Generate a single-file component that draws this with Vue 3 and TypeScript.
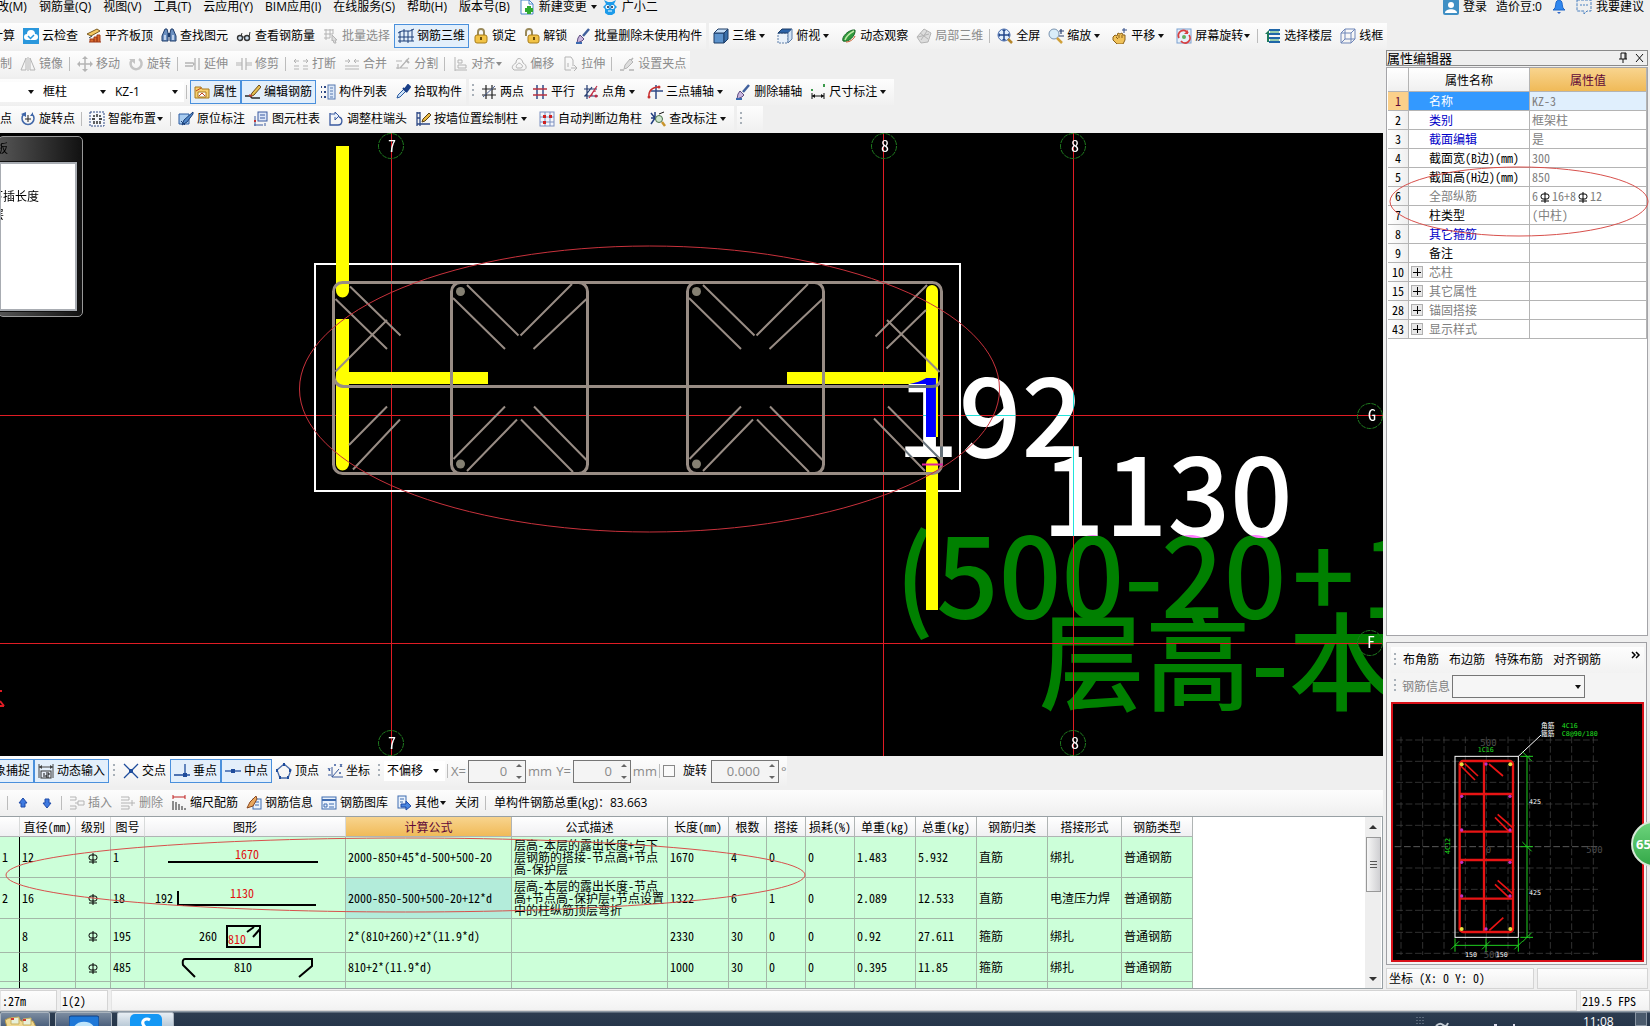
<script setup lang="ts">
import { ref } from 'vue'

interface Tool {
  t?: string
  i?: string
  on?: boolean
  off?: boolean
  dd?: 'split' | 'menu'
  sep?: boolean
  handle?: boolean
}

const G = '#b4b4b4'
const N = '#2f4a86'

const icons: Record<string, string> = {
  newdoc: `<path d="M2 1h8l4 4v10H2z" fill="#fff" stroke="#4a86c8"/><path d="M10 1v4h4" fill="none" stroke="#4a86c8"/><path d="M10 7v8M6 11h8" stroke="#2faa2f" stroke-width="4"/>`,
  robot: `<path d="M4 5l-2-4 4 2h4l4-2-2 4 3 3-2 2v4l-3 2H6l-3-2v-4L1 8z" fill="#1d9bea"/><circle cx="5.500" cy="8" r="2" fill="#fff"/><circle cx="10.500" cy="8" r="2" fill="#fff"/><circle cx="6" cy="8" r="1" fill="#124"/><circle cx="10" cy="8" r="1" fill="#124"/><path d="M6 12h4" stroke="#fff"/>`,
  login: `<rect x="0" y="0" width="16" height="16" rx="2" fill="#3f8fc4"/><circle cx="8" cy="6" r="3" fill="#fff"/><path d="M2 14c0-5 12-5 12 0z" fill="#fff"/>`,
  bell: `<path d="M8 1c4 0 3 6 4 8l2 2H2l2-2c1-2 0-8 4-8z" fill="#2f86ee" stroke="#1f66c8"/><path d="M6 13h4l-2 2z" fill="#2f66c8"/>`,
  comment: `<path d="M1 1h14v11h-4l-3 3v-3H1z" fill="none" stroke="#4a80c0" stroke-dasharray="3 1"/><path d="M4 6h2M7 6h2M10 6h2" stroke="#4a80c0"/>`,
  cloud: `<rect width="16" height="16" fill="#2a97dc"/><path d="M4 12a3 3 0 0 1 0-6 4 4 0 0 1 8 0 3 3 0 0 1 0 6z" fill="#fff"/><path d="M5 8l2.500 2.500L11 7" fill="none" stroke="#2a97dc" stroke-width="1.500"/>`,
  flat: `<path d="M1 6l10-5 3 2L5 8z" fill="#f5c860" stroke="#7a5a20"/><path d="M3 10l3-2" stroke="#345" /><path d="M3 14h12M4 14v-3h4v3M8 14V9h3v5M11 14V7h3v7" fill="#d86a2c" stroke="#a03a18"/>`,
  binoc: `<path d="M4 1h2l1 4v8H1V8zM12 1h-2L9 5v8h6V8z" fill="#6a8fc0" stroke="#1f3d6b"/><path d="M7 5h2v4H7z" fill="#1f3d6b"/><path d="M4 7v5M12 7v5" stroke="#dce8f8" stroke-width="1.500"/>`,
  glasses: `<circle cx="4" cy="10" r="2.500" fill="#cde" stroke="#333" stroke-width="1.400"/><circle cx="11" cy="10" r="2.500" fill="#cde" stroke="#333" stroke-width="1.400"/><path d="M6 9h3M6 5L5 8M14 4l-1 5" stroke="#333" fill="none"/>`,
  batch: `<path d="M1 2h9M1 6h9M1 10h6M3 1v11M7 1v9M10 1v5" stroke="${G}"/><path d="M9 7l5 5-2 0 1 3-2 0-1-3-1 1z" fill="#ddd" stroke="${G}"/>`,
  grid3d: `<path d="M2 3v12M6 1v12M10 3v12M14 1v12M0 5l4-2 4 0 4 0 4-2M0 9h16M0 13h16" fill="none" stroke="#1c3f78"/>`,
  lock: `<path d="M5 7V4a3 3 0 0 1 6 0v3" fill="none" stroke="#9a8a5a" stroke-width="2"/><rect x="2" y="7" width="12" height="8" rx="2" fill="#f2c346" stroke="#a87c18"/><path d="M8 9v3" stroke="#6a4c08" stroke-width="2"/>`,
  unlock: `<path d="M2 8V4a3 3 0 0 1 6 0v3" fill="none" stroke="#9a8a5a" stroke-width="2"/><rect x="4" y="7" width="11" height="8" rx="2" fill="#f2c346" stroke="#a87c18"/><path d="M10 9v3" stroke="#6a4c08" stroke-width="2"/>`,
  brush: `<path d="M14 1L8 8" stroke="#3f5f9c" stroke-width="2.500"/><path d="M5 7l4 4-2 2-5 2 1-5z" fill="#c9b6dd" stroke="#5d4a80"/><path d="M1 15h6" stroke="#3a6ab0" stroke-width="2"/>`,
  cube: `<path d="M1 5h10v10H1z" fill="#5d93cc" stroke="#1d3c66"/><path d="M1 5l4-4h10l-4 4z" fill="#c4dcf4" stroke="#1d3c66"/><path d="M11 15l4-4V1l-4 4z" fill="#3a6fa8" stroke="#1d3c66"/>`,
  cubetop: `<path d="M1 5h10v10H1z" fill="#e9f1fa" stroke="#5f7fa8" stroke-dasharray="2 1"/><path d="M1 5l4-4h10l-4 4z" fill="#2a62a8" stroke="#1d3c66"/><path d="M11 15l4-4V1l-4 4z" fill="#d2e2f4" stroke="#5f7fa8"/>`,
  orbit: `<path d="M2 13c-2-4 6-12 12-11 1 5-6 13-12 11z" fill="#2f9a3c" stroke="#1b6628"/><path d="M4 12C6 7 9 5 13 3" stroke="#bfe8a8" fill="none" stroke-width="1.500"/><path d="M5 14c4 0 8-3 9-6" stroke="#c85a28" fill="none"/>`,
  local3d: `<path d="M8 1l7 4-3 9-7 1-4-6z" fill="#ddd" stroke="${G}"/><path d="M4 5l8 6M11 3L5 12M2 9l11-3" stroke="${G}"/>`,
  fit: `<circle cx="7" cy="7" r="6" fill="#e2eefc" stroke="#3f64a8"/><path d="M7 2v10M2 7h10" stroke="#23488c" stroke-width="1.500"/><path d="M7 1l2 2H5zM7 13l2-2H5zM1 7l2-2v4zM13 7l-2-2v4z" fill="#23488c"/><path d="M11 11l4 4" stroke="#b5862c" stroke-width="2.500"/>`,
  zoom: `<circle cx="6" cy="6" r="5" fill="#d9ecf8" stroke="#7a94b0"/><path d="M9 10l5 5" stroke="#d0a03a" stroke-width="2.500"/><path d="M13 1v5M11 3h5M11 8h5" stroke="#2a3f70" stroke-width="1.200"/>`,
  pan: `<path d="M1 9l2-2 2 1 1-3 2 1 2-1 1 2 2 0v5l-2 4H5l-4-4z" fill="#f0c25a" stroke="#8a6018"/><path d="M4 9l2 2M7 7v3M10 7v3" stroke="#8a6018"/><path d="M12 0v5M10 2h5" stroke="#2f4a86"/>`,
  rot: `<rect x="1" y="1" width="14" height="14" fill="#e6f0fa" stroke="#7aa0d0"/><path d="M3 10a5 5 0 0 1 9-5M13 7a5 5 0 0 1-8 6" fill="none" stroke="#d84040" stroke-width="1.800"/><path d="M12 2v4H8z" fill="#d84040"/><circle cx="8" cy="9" r="2" fill="#60b060"/>`,
  floors: `<path d="M4 2h11M4 6h11M4 10h11M4 14h11" stroke="#1f66a8" stroke-width="2"/><path d="M0 6l4-4v4z" fill="#1f7a5a"/><path d="M3 4v10" stroke="#1f7a5a" stroke-width="2"/><path d="M5 4h9M5 12h9" stroke="#38a060"/>`,
  wire: `<path d="M1 5h10v10H1zM1 5l4-4h10l-4 4M15 1v10l-4 4M5 1v10M5 11h10M5 11l-4 4" fill="none" stroke="#6f86b8"/>`,
  mirror: `<path d="M6 2v12H1zM10 2v12h5z" fill="none" stroke="${G}"/><path d="M8 1v14" stroke="${G}"/>`,
  move: `<path d="M8 1v14M1 8h14" stroke="${G}" stroke-width="1.500"/><path d="M8 0l3 3H5zM8 16l3-3H5zM0 8l3-3v6zM16 8l-3-3v6z" fill="${G}"/>`,
  rotate: `<path d="M4 4a5.500 5.500 0 1 0 7-1" fill="none" stroke="#c4c4c4" stroke-width="2.500"/><path d="M1 3h6v5z" fill="#c4c4c4"/>`,
  extend: `<path d="M0 7h8M0 10h8M10 2v12M14 2v12" stroke="${G}" stroke-width="1.300"/><path d="M8 6l2 2-2 2z" fill="${G}"/>`,
  trim: `<path d="M0 7h6M10 7h6M0 9h6M10 9h6M6 2v12M10 2v12" stroke="${G}" stroke-width="1.200"/>`,
  brk: `<path d="M1 13h5M10 13h5M1 10h5M10 10h5M1 5h5M10 5h5M3 3L1 5l2 2M13 3l2 2-2 2" fill="none" stroke="${G}"/>`,
  merge: `<path d="M1 13h14M1 10h14M1 5h5M10 5h5M4 3l2 2-2 2M12 3l-2 2 2 2" fill="none" stroke="${G}"/>`,
  split: `<path d="M1 5h6M1 12h12M14 2L5 12M3 8v5" stroke="${G}" stroke-width="1.200"/><path d="M11 4l3 3" stroke="${G}" stroke-width="2"/>`,
  align: `<path d="M3 1v14M3 14h12M6 4h4v3H6zM6 9h8v3H6z" fill="none" stroke="${G}"/>`,
  offset: `<path d="M3 14c-4-3 0-6 2-7 0-6 6-6 7 0 4 2 4 6 1 7z" fill="none" stroke="${G}"/><path d="M6 12c-2-1 0-4 2-5 3 1 5 4 2 5z" fill="none" stroke="${G}"/>`,
  stretch: `<path d="M3 1h6l2 3v6M3 1v13h6" fill="none" stroke="${G}"/><path d="M6 7v4M9 12h5M12 9l3 3-3 3" fill="none" stroke="${G}"/>`,
  grip: `<path d="M1 14h4M10 14h5M14 2L7 10" stroke="${G}" stroke-width="1.500"/><path d="M11 3l3 3-6 6-3 1 1-4z" fill="#ddd" stroke="${G}"/>`,
  prop: `<path d="M1 3h6l1 2h7v9H1z" fill="#f6d070" stroke="#a8781c"/><path d="M4 8h8v5H4z" fill="#fff" stroke="#a8781c"/><path d="M5 12l3-3 3 3M2 7l5-3" stroke="#c04020" fill="none"/>`,
  pencil: `<path d="M0 12h5l2 2h8" stroke="#2a2a2a" fill="none" stroke-width="1.300"/><path d="M14 1l-7 8-2 4 4-2 7-8z" fill="#e8c050" stroke="#6a4a18"/><path d="M4 11l3 1" stroke="#c03a3a" stroke-width="1.500"/>`,
  list: `<path d="M1 3h1M1 8h1M1 13h1M4 3h2M4 8h2M4 13h2" stroke="${N}" stroke-width="2"/><rect x="8" y="1" width="7" height="14" fill="#dce8f8" stroke="#5678b0"/><path d="M10 4h3M10 7h3M10 10h3M10 13h3" stroke="#5678b0"/>`,
  dropper: `<path d="M2 14l1-3 6-6 2 2-6 6z" fill="#cfe3f8" stroke="#2a5aa0"/><path d="M8 4l4 4M10 5l3-4 2 2-3 4z" stroke="#1a3f88" stroke-width="2" fill="#1a3f88"/>`,
  twopt: `<path d="M5 1v14M11 1v14M1 5h14M1 11h14" stroke="#222" stroke-width="1.200"/><path d="M2 13L14 2" stroke="#4a5f90"/>`,
  par: `<path d="M5 1v14M11 1v14" stroke="${N}" stroke-width="1.500"/><path d="M1 5h14M1 11h14" stroke="#b83040" stroke-width="1.500"/>`,
  ptang: `<path d="M4 1v14M1 5h13M9 3L2 12M1 12h14" stroke="#223a70" stroke-width="1.200"/><path d="M6 14L14 2M9 12a4 4 0 0 1 4-5" stroke="#c02840" fill="none" stroke-width="1.200"/><circle cx="13" cy="12" r="1.500" fill="#c02840"/>`,
  threept: `<path d="M9 1v14M4 7h12" stroke="${N}" stroke-width="1.500"/><path d="M2 14C1 7 5 3 12 3" stroke="#c83030" fill="none" stroke-width="1.500"/><circle cx="2" cy="13" r="1.500" fill="#c83030"/><circle cx="12" cy="3" r="1.500" fill="#c83030"/>`,
  dim: `<path d="M2 9v6M14 9v6M2 12h12" stroke="#111"/><path d="M2 12l3-2v4zM14 12l-3-2v4z" fill="#111"/><rect x="1" y="5" width="2" height="2" fill="#3a9a4a"/><rect x="13" y="0" width="2" height="3" fill="#3a9a4a"/>`,
  rotpt: `<path d="M4 3a6 6 0 1 0 8 0" fill="none" stroke="#3f66a8" stroke-width="1.500"/><path d="M1 3l5-2v5zM13 1v4h-3" fill="#3f66a8"/><path d="M8 4v7M5 8h6" stroke="#222"/>`,
  smart: `<rect x="1" y="1" width="14" height="14" fill="#f6f8fc" stroke="${N}" stroke-dasharray="2 1"/><path d="M5 4v2M8 3v3M11 4v2M5 10v3M8 10v3M11 10v3M3 8h3M10 8h3" stroke="#111" stroke-width="1.300"/>`,
  orig: `<path d="M1 3h10v10H1z" fill="#a8ccf0" stroke="#2a5aa0"/><path d="M15 1L6 9l-2 5 5-3 6-8z" fill="#4f86c8" stroke="#1a3f78"/><path d="M3 10l4 4" stroke="#1a3f78"/>`,
  coltbl: `<rect x="5" y="1" width="9" height="9" fill="#dce6f8" stroke="#3a5aa0"/><path d="M7 4h5M7 7h5" stroke="#3a5aa0"/><path d="M1 14h9M2 5v10M12 12v3" stroke="#3a5aa0"/><path d="M1 10h2" stroke="#c03030" stroke-width="2"/>`,
  colhead: `<path d="M2 2v12h8c5 0 5-7 1-8" fill="none" stroke="#3a5aa0" stroke-width="1.300"/><path d="M2 3h5V1l4 4-4 4V6" fill="#e6eefa" stroke="#3a5aa0"/>`,
  bywall: `<path d="M2 1v14M5 1v14M2 13h13M2 2h3M2 7h3" stroke="${N}" stroke-width="1.300"/><path d="M14 2L8 8l-1 3 3-1 6-6z" fill="#e8b840" stroke="#5a4010"/>`,
  corner: `<rect x="1" y="1" width="14" height="14" fill="#f4f6fc" stroke="#7c90c0"/><path d="M6 1v14M11 1v14M1 6h14M1 11h14" stroke="#7c90c0"/><rect x="4" y="4" width="3" height="3" fill="#d02020"/><rect x="10" y="4" width="3" height="3" fill="#d02020"/><rect x="4" y="10" width="3" height="3" fill="#d02020"/>`,
  checkmod: `<path d="M1 2l4 5-4 6M5 1v5M1 7h5" fill="none" stroke="#223f80" stroke-width="1.500"/><circle cx="9" cy="8" r="3.500" fill="#cfe6cf" stroke="#4a704a"/><path d="M12 11l3 4" stroke="#c8942c" stroke-width="2.500"/><path d="M9 3l5-2" stroke="#111"/>`,
  dyn: `<path d="M1 1v14M15 1v14M1 4h14" stroke="#444"/><path d="M1 4l3-2v4zM15 4l-3-2v4z" fill="#444"/><rect x="3" y="8" width="10" height="7" fill="#e8eef8" stroke="#333"/><path d="M6 10v4M8 10h3v2H8v2h3" stroke="#111" fill="none"/>`,
  cross: `<path d="M1 1l14 14M15 1L1 15" stroke="#1e4c9c" stroke-width="1.300"/><rect x="6" y="6" width="4" height="4" fill="#1e4c9c"/>`,
  perp: `<path d="M0 12h16M11 1v11" stroke="#1e4c9c" stroke-width="1.300"/><rect x="9" y="10" width="4" height="4" fill="#1e4c9c"/>`,
  mid: `<path d="M0 8h16" stroke="#1e4c9c" stroke-width="1.300"/><rect x="6" y="6" width="4" height="4" fill="#1e4c9c"/>`,
  poly: `<path d="M8 1l7 6-3 8H4L1 7z" fill="none" stroke="#4a6ca8" stroke-width="1.300"/><path d="M8 0v3M1 6v3M14 6v3M4 13v3M12 13v3" stroke="#1e4c9c" stroke-width="2"/>`,
  coord: `<path d="M5 4v10h11M5 14l7-8M1 12h3M1 5l2 3M3 5l-1 3M13 1l2 3M15 1l-2 3" fill="none" stroke="#3a5a9c"/><circle cx="8" cy="2" r="1" fill="#3a5a9c"/><circle cx="13" cy="10" r="1" fill="#3a5a9c"/>`,
  up: `<path d="M8 3l4 5h-2v4H6V8H4z" fill="#3f7ae0" stroke="#1f4aa8"/>`,
  down: `<path d="M8 13l4-5h-2V4H6v4H4z" fill="#3f7ae0" stroke="#1f4aa8"/>`,
  ins: `<path d="M1 2h6v3H1M1 14h6v-3H1M6 8h3M9 6h6v4H9z" fill="none" stroke="${G}"/>`,
  del: `<path d="M1 2h8v3H1M1 14h8v-3H1M1 8h14M12 5v6" fill="none" stroke="${G}"/>`,
  scale: `<path d="M2 2h12M2 0v4M14 0v4" stroke="#c02020"/><path d="M2 6v9M5 7v8M8 9v6M11 11v4M14 13v2" stroke="#222"/>`,
  info: `<rect x="7" y="4" width="8" height="10" fill="#eaf2fc" stroke="#3f6cb0"/><path d="M9 7h4M9 10h4" stroke="#3f6cb0"/><path d="M10 1L4 7l-3 6 6-2 4-7z" fill="#e8a860" stroke="#8a4820"/>`,
  lib: `<rect x="1" y="2" width="14" height="12" fill="#eaf2fc" stroke="#3f6cb0"/><path d="M1 5h14" stroke="#3f6cb0" stroke-width="2"/><path d="M3 9h3v3H3zM8 9h5M8 12h5" stroke="#3f6cb0" fill="none"/>`,
  other: `<rect x="2" y="1" width="8" height="12" fill="#eaf2fc" stroke="#3f6cb0"/><path d="M4 4h4M4 7h3" stroke="#3f6cb0"/><path d="M5 9h5V6l5 5-5 4v-3H5z" fill="#4a86e0" stroke="#1f4aa8"/>`,
}

const grade = `<path d="M5 0v11M1 9h8" stroke="#000"/><path d="M3 2h4q2 0 2 2.500t-2 2.500H3q-2 0-2-2.500T3 2z" fill="none" stroke="#000"/>`

const menus = ['改(M)', '钢筋量(Q)', '视图(V)', '工具(T)', '云应用(Y)', 'BIM应用(I)', '在线服务(S)', '帮助(H)', '版本号(B)']

const viewBars: Tool[][] = [
  [
    { t: '计算' }, { t: '云检查', i: 'cloud' }, { t: '平齐板顶', i: 'flat' }, { t: '查找图元', i: 'binoc' },
    { t: '查看钢筋量', i: 'glasses' }, { t: '批量选择', i: 'batch', off: true }, { t: '钢筋三维', i: 'grid3d', on: true },
    { t: '锁定', i: 'lock' }, { t: '解锁', i: 'unlock' }, { t: '批量删除未使用构件', i: 'brush' },
  ],
  [
    { t: '三维', i: 'cube', dd: 'split' }, { t: '俯视', i: 'cubetop', dd: 'split' }, { t: '动态观察', i: 'orbit' },
    { t: '局部三维', i: 'local3d', off: true }, { sep: true }, { t: '全屏', i: 'fit' }, { t: '缩放', i: 'zoom', dd: 'split' },
    { t: '平移', i: 'pan', dd: 'split' }, { t: '屏幕旋转', i: 'rot', dd: 'menu' }, { sep: true },
    { t: '选择楼层', i: 'floors' }, { t: '线框', i: 'wire' },
  ],
]

const editBar: Tool[] = [
  { t: '制', off: true }, { t: '镜像', i: 'mirror', off: true }, { sep: true }, { t: '移动', i: 'move', off: true },
  { t: '旋转', i: 'rotate', off: true }, { sep: true }, { t: '延伸', i: 'extend', off: true }, { t: '修剪', i: 'trim', off: true },
  { sep: true }, { t: '打断', i: 'brk', off: true }, { t: '合并', i: 'merge', off: true }, { t: '分割', i: 'split', off: true },
  { sep: true }, { t: '对齐', i: 'align', off: true, dd: 'menu' }, { t: '偏移', i: 'offset', off: true },
  { t: '拉伸', i: 'stretch', off: true }, { sep: true }, { t: '设置夹点', i: 'grip', off: true },
]

const memberBar: Tool[] = [
  { t: '属性', i: 'prop', on: true }, { t: '编辑钢筋', i: 'pencil', on: true }, { t: '构件列表', i: 'list' }, { t: '拾取构件', i: 'dropper' },
]
const axisBar: Tool[] = [
  { handle: true }, { t: '两点', i: 'twopt' }, { t: '平行', i: 'par' }, { t: '点角', i: 'ptang', dd: 'split' },
  { t: '三点辅轴', i: 'threept', dd: 'split' }, { t: '删除辅轴', i: 'brush' }, { t: '尺寸标注', i: 'dim', dd: 'split' },
]
const columnBar: Tool[] = [
  { t: '点' }, { t: '旋转点', i: 'rotpt' }, { sep: true }, { t: '智能布置', i: 'smart', dd: 'menu' }, { sep: true },
  { t: '原位标注', i: 'orig' }, { t: '图元柱表', i: 'coltbl' }, { t: '调整柱端头', i: 'colhead' },
  { t: '按墙位置绘制柱', i: 'bywall', dd: 'split' }, { t: '自动判断边角柱', i: 'corner' }, { t: '查改标注', i: 'checkmod', dd: 'split' },
]
const snapBar: Tool[] = [
  { t: '象捕捉', on: true }, { t: '动态输入', i: 'dyn', on: true }, { handle: true }, { t: '交点', i: 'cross' },
  { t: '垂点', i: 'perp', on: true }, { t: '中点', i: 'mid', on: true }, { t: '顶点', i: 'poly' }, { t: '坐标', i: 'coord' }, { handle: true },
]
const rebarBar: Tool[] = [
  { sep: true }, { i: 'up' }, { i: 'down' }, { sep: true }, { t: '插入', i: 'ins', off: true }, { t: '删除', i: 'del', off: true },
  { t: '缩尺配筋', i: 'scale' }, { t: '钢筋信息', i: 'info' }, { t: '钢筋图库', i: 'lib' }, { t: '其他', i: 'other', dd: 'menu' },
  { t: '关闭' }, { sep: true },
]

const props = [
  { n: 1, k: '名称', v: 'KZ-3', c: 'sel' },
  { n: 2, k: '类别', v: '框架柱', c: 'blue' },
  { n: 3, k: '截面编辑', v: '是', c: 'blue' },
  { n: 4, k: '截面宽(B边)(mm)', v: '300', c: '' },
  { n: 5, k: '截面高(H边)(mm)', v: '850', c: '' },
  { n: 6, k: '全部纵筋', v: '', c: 'gray' },
  { n: 7, k: '柱类型', v: '(中柱)', c: '' },
  { n: 8, k: '其它箍筋', v: '', c: 'blue' },
  { n: 9, k: '备注', v: '', c: '' },
  { n: 10, k: '芯柱', v: '', c: 'gray', plus: true },
  { n: 15, k: '其它属性', v: '', c: 'gray', plus: true },
  { n: 28, k: '锚固搭接', v: '', c: 'gray', plus: true },
  { n: 43, k: '显示样式', v: '', c: 'gray', plus: true },
]

const heads = ['', '直径(mm)', '级别', '图号', '图形', '计算公式', '公式描述', '长度(mm)', '根数', '搭接', '损耗(%)', '单重(kg)', '总重(kg)', '钢筋归类', '搭接形式', '钢筋类型']
const cols = [20, 56, 35, 34, 201, 166, 156, 61, 38, 39, 49, 61, 61, 71, 74, 71]
const bars = [
  { n: '1', d: '12', no: '1', f: '2000-850+45*d-500+500-20', desc: ['层高-本层的露出长度+与下', '层钢筋的搭接-节点高+节点', '高-保护层'], rest: ['1670', '4', '0', '0', '1.483', '5.932', '直筋', '绑扎', '普通钢筋'] },
  { n: '2', d: '16', no: '18', f: '2000-850-500+500-20+12*d', desc: ['层高-本层的露出长度-节点', '高+节点高-保护层+节点设置', '中的柱纵筋顶层弯折'], rest: ['1322', '6', '1', '0', '2.089', '12.533', '直筋', '电渣压力焊', '普通钢筋'] },
  { n: '', d: '8', no: '195', f: '2*(810+260)+2*(11.9*d)', desc: [], rest: ['2330', '30', '0', '0', '0.92', '27.611', '箍筋', '绑扎', '普通钢筋'] },
  { n: '', d: '8', no: '485', f: '810+2*(11.9*d)', desc: [], rest: ['1000', '30', '0', '0', '0.395', '11.85', '箍筋', '绑扎', '普通钢筋'] },
]

const category = ref('框柱')
const member = ref('KZ-1')
const offsetMode = ref('不偏移')
const dx = ref('0')
const dy = ref('0')
const angle = ref('0.000')
const rotateOn = ref(false)
const rebarInfo = ref('')

const gridX = [64, 129, 193, 257, 320, 385, 450, 512, 576, 641]
const gridY = [330, 394, 457, 522, 586, 714, 778, 841, 907, 970]
</script>

<template>
  <div class="app">
    <header class="menubar">
      <nav class="menus">
        <a v-for="m in menus" :key="m" href="#">{{ m }}</a>
        <button class="mi new"><svg viewBox="0 0 16 16" class="ic" v-html="icons.newdoc"></svg>新建变更<i class="arr split"></i></button>
        <button class="mi bot"><svg viewBox="0 0 16 16" class="ic" v-html="icons.robot"></svg>广小二</button>
      </nav>
      <div class="account">
        <button class="mi"><svg viewBox="0 0 16 16" class="ic" v-html="icons.login"></svg>登录</button>
        <span class="beans">造价豆:0</span>
        <button class="mi" aria-label="消息"><svg viewBox="0 0 16 16" class="ic" v-html="icons.bell"></svg></button>
        <button class="mi"><svg viewBox="0 0 16 16" class="ic" v-html="icons.comment"></svg>我要建议</button>
      </div>
    </header>

    <div class="row view-row">
      <div v-for="(bar, b) in viewBars" :key="b" class="group">
        <template v-for="(x, k) in bar" :key="k">
          <span v-if="x.sep" class="sep"></span>
          <button v-else class="tool" :class="{ on: x.on }" :disabled="x.off">
            <svg v-if="x.i" viewBox="0 0 16 16" class="ic" v-html="icons[x.i]"></svg>{{ x.t }}<i v-if="x.dd" class="arr" :class="x.dd"></i>
          </button>
        </template>
      </div>
    </div>

    <div class="body">
      <main class="left">
        <div class="row lead">
          <div class="group">
            <template v-for="(x, k) in editBar" :key="k">
              <span v-if="x.sep" class="sep"></span>
              <button v-else class="tool" :disabled="x.off">
                <svg v-if="x.i" viewBox="0 0 16 16" class="ic" v-html="icons[x.i]"></svg>{{ x.t }}<i v-if="x.dd" class="arr" :class="x.dd"></i>
              </button>
            </template>
          </div>
        </div>
        <div class="row short">
          <div class="group">
            <span class="combo tail"><i class="arr split"></i></span>
            <label class="combo"><select v-model="category" aria-label="构件类型"><option>框柱</option></select><i class="arr split"></i></label>
            <label class="combo"><select v-model="member" aria-label="构件名称"><option>KZ-1</option></select><i class="arr split"></i></label>
            <span class="sep"></span>
            <button v-for="x in memberBar" :key="x.t" class="tool" :class="{ on: x.on }">
              <svg viewBox="0 0 16 16" class="ic" v-html="icons[x.i!]"></svg>{{ x.t }}
            </button>
          </div>
          <div class="group">
            <template v-for="(x, k) in axisBar" :key="k">
              <span v-if="x.handle" class="handle"></span>
              <button v-else class="tool">
                <svg viewBox="0 0 16 16" class="ic" v-html="icons[x.i!]"></svg>{{ x.t }}<i v-if="x.dd" class="arr" :class="x.dd"></i>
              </button>
            </template>
          </div>
        </div>
        <div class="row lead">
          <div class="group">
            <template v-for="(x, k) in columnBar" :key="k">
              <span v-if="x.sep" class="sep"></span>
              <button v-else class="tool">
                <svg v-if="x.i" viewBox="0 0 16 16" class="ic" v-html="icons[x.i]"></svg>{{ x.t }}<i v-if="x.dd" class="arr" :class="x.dd"></i>
              </button>
            </template>
          </div>
          <div class="group stub"><span class="handle"></span></div>
        </div>

        <section class="canvas">
          <svg class="scene" viewBox="0 133 1383 623" preserveAspectRatio="xMinYMin slice">
            <g class="big" fill="#008000">
              <text x="895" y="618">(<tspan x="936">500-</tspan><tspan x="1161">20</tspan><tspan x="1292">+</tspan><tspan x="1361">1</tspan></text>
              <text x="1039" y="702" class="cjk">层高-本</text>
            </g>
            <g stroke="#e01c24" fill="none">
              <path d="M391.500 133V756M883.500 133V756M1073.500 133V756M0 415.500H1383M0 643.500H1383" />
              <path d="M0 691h2M0 706h4M0 701l4 5" stroke-width="2" />
            </g>
            <g stroke="#1f7a1f" fill="none" stroke-dasharray="5 1">
              <circle v-for="c in [[391, 146], [884, 146], [1073, 146], [391, 743], [1073, 743], [1370, 416], [1370, 643]]" :key="c.join()" :cx="c[0]" :cy="c[1]" r="12.500" />
            </g>
            <g fill="#fff" class="mark">
              <text x="388" y="152">7</text><text x="881" y="152">8</text><text x="1071" y="152">8</text>
              <text x="388" y="749">7</text><text x="1071" y="749">8</text>
              <text x="1368" y="421">G</text><text x="1367" y="648">F</text>
            </g>
            <rect x="315" y="264" width="645" height="227" fill="none" stroke="#fff" stroke-width="2" />
            <g fill="#ff0">
              <path d="M336 146h13v145a6 6 0 0 1-13 0zM336 319h13v145a6 6 0 0 1-13 0zM345 372h143v12H345z" />
              <path d="M926 437v-146a6 6 0 0 1 12 0v146zM926 610V464a6 6 0 0 1 12 0v146zM787 372h143v12H787z" />
            </g>
            <g stroke="#988c84" fill="none" stroke-width="3">
              <rect x="333.500" y="282.500" width="608" height="191" rx="9" />
              <path d="M333.500 375q1 11 10 11.500H932q9 0 9.500-11" />
              <g v-for="ox in [0, 236]" :key="ox" :transform="`translate(${ox} 0)`">
                <rect x="451.500" y="282.500" width="136" height="191" rx="9" />
                <path stroke-width="2" d="M467 285L518.500 335.500M453 298L505 349M572 284L520.500 335.500M586.500 299L533.500 349M453.500 459L505 406.500M467 471L517 419.500M586.500 460L534 406.500M573 472L521 419.500" />
                <g fill="#858072" stroke="none"><circle cx="460.500" cy="291.500" r="4.500" /><circle cx="460.500" cy="464" r="4.500" /></g>
              </g>
              <path stroke-width="2" d="M350 286.500L400.500 335.500M335.500 299L387 349M335.500 371.500L387 320M349 445L387 406.500M353 469.500L400 419.500" />
              <path stroke-width="2" d="M927 285L875.500 336.500M926 310L886.500 348.500M887 320L939.500 372M888 406.500L940.500 459.500M874 418.500L925 471" />
            </g>
            <path d="M922 464.500h21" stroke="#e0209c" stroke-width="2" />
            <g class="big xor" fill="#fff">
              <text x="896" y="457">192</text>
              <text x="1042" y="536">1130</text>
            </g>
            <ellipse cx="649.500" cy="389" rx="350" ry="143" fill="none" stroke="#c8323c" />
          </svg>
          <aside class="float">
            <div class="float-title">板</div>
            <div class="float-body"><p>下插长度</p><p class="cut">层</p></div>
          </aside>
        </section>

        <div class="row snap">
          <div class="group">
            <template v-for="(x, k) in snapBar" :key="k">
              <span v-if="x.handle" class="handle"></span>
              <button v-else class="tool" :class="{ on: x.on, cropped: k === 0 }">
                <svg v-if="x.i" viewBox="0 0 16 16" class="ic" v-html="icons[x.i]"></svg>{{ x.t }}
              </button>
            </template>
            <label class="combo narrow"><select v-model="offsetMode" aria-label="偏移方式"><option>不偏移</option></select><i class="arr split"></i></label>
            <span class="sep"></span>
            <label class="num">X=<span class="spin"><input v-model="dx" disabled /><i class="ud"></i></span>mm</label>
            <label class="num">Y=<span class="spin"><input v-model="dy" disabled /><i class="ud"></i></span>mm</label>
            <span class="sep"></span>
            <label class="chk"><input v-model="rotateOn" type="checkbox" />旋转</label>
            <span class="num"><span class="spin wide"><input v-model="angle" aria-label="旋转角度" disabled /><i class="ud"></i></span>°</span>
          </div>
        </div>

        <div class="row rebar">
          <template v-for="(x, k) in rebarBar" :key="k">
            <span v-if="x.sep" class="sep"></span>
            <button v-else class="tool" :aria-label="x.t ?? x.i" :disabled="x.off">
              <svg v-if="x.i" viewBox="0 0 16 16" class="ic" v-html="icons[x.i]"></svg>{{ x.t }}<i v-if="x.dd" class="arr" :class="x.dd"></i>
            </button>
          </template>
          <span class="total">单构件钢筋总重(kg)：83.663</span>
        </div>

        <section class="sheet">
          <table class="bars">
            <colgroup><col v-for="(w, k) in cols" :key="k" :style="{ width: w + 'px' }" /></colgroup>
            <thead><tr><th v-for="(h, k) in heads" :key="k" :class="{ hot: k === 5 }">{{ h }}</th></tr></thead>
            <tbody>
              <tr v-for="(r, k) in bars" :key="k" :class="'r' + k">
                <th class="rn">{{ r.n }}</th>
                <td>{{ r.d }}</td>
                <td class="mid"><svg class="grade" viewBox="0 0 10 11" v-html="grade"></svg></td>
                <td>{{ r.no }}</td>
                <td class="shape">
                  <svg v-if="k === 0" viewBox="145 837 200 40" width="200" height="40"><path d="M168 862h150" stroke="#000" stroke-width="2" /><text x="235" y="859" class="red">1670</text></svg>
                  <svg v-else-if="k === 1" viewBox="145 878 200 40" width="200" height="40"><path d="M178 891v14h138" fill="none" stroke="#000" stroke-width="2" /><text x="155" y="903">192</text><text x="230" y="898" class="red">1130</text></svg>
                  <svg v-else-if="k === 2" viewBox="145 919 200 33" width="200" height="33"><path d="M227 926h33v21h-33zM247 932l7-5M253 937l7-8" fill="none" stroke="#000" stroke-width="2" /><text x="199" y="941">260</text><text x="228" y="944" class="red">810</text></svg>
                  <svg v-else viewBox="145 953 200 28" width="200" height="28"><path d="M195 977l-12-12q-1-6 2-6h127v7l-13 11" fill="none" stroke="#000" stroke-width="2" /><text x="234" y="972">810</text></svg>
                </td>
                <td :class="{ cur: k === 1 }">{{ r.f }}</td>
                <td class="desc"><div v-for="l in r.desc" :key="l">{{ l }}</div></td>
                <td v-for="(v, j) in r.rest" :key="j">{{ v }}</td>
              </tr>
              <tr class="r4"><th class="rn"></th><td v-for="j in 15" :key="j"></td></tr>
            </tbody>
          </table>
          <div class="scroll"><i class="up"></i><span class="thumb"><b></b></span><i class="dn"></i></div>
          <svg class="ring" viewBox="0 0 801 76"><ellipse cx="400.500" cy="38" rx="399.500" ry="37" fill="none" stroke="#d8504c" /></svg>
        </section>
      </main>

      <aside class="right">
        <div class="dock-title"><span>属性编辑器</span>
          <svg viewBox="0 0 30 14" width="30" height="14"><path d="M2 8h8M4 8V2h5v6M8 2v6M6 8v4M19 3l7 8M26 3l-7 8" fill="none" stroke="#111" /></svg>
        </div>
        <section class="prop-box">
          <table class="props">
            <colgroup><col class="c1" /><col class="c2" /><col /></colgroup>
            <thead><tr><th></th><th>属性名称</th><th class="hot">属性值</th></tr></thead>
            <tbody>
              <tr v-for="p in props" :key="p.n" :class="p.c">
                <th>{{ p.n }}</th>
                <td class="k"><button v-if="p.plus" class="plus" aria-label="展开"></button>{{ p.k }}</td>
                <td class="v">
                  <template v-if="p.n === 6">6<svg class="grade" viewBox="0 0 10 11" v-html="grade"></svg>16+8<svg class="grade" viewBox="0 0 10 11" v-html="grade"></svg>12</template>
                  <template v-else>{{ p.v }}</template>
                </td>
              </tr>
            </tbody>
          </table>
          <svg class="prop-ring" viewBox="0 0 260 71"><ellipse cx="130" cy="35.500" rx="129" ry="34.500" fill="none" stroke="#d8504c" /></svg>
        </section>

        <section class="preview-box">
          <div class="p-tools">
            <span class="handle"></span>
            <button>布角筋</button><button>布边筋</button><button>特殊布筋</button><button>对齐钢筋</button>
            <button class="more" aria-label="更多"><svg viewBox="0 0 10 8" width="10" height="8"><path d="M1 1l3 3-3 3M5 1l3 3-3 3" fill="none" stroke="#000" stroke-width="1.500" /></svg></button>
          </div>
          <div class="p-info">
            <span class="handle"></span>
            <label for="ri">钢筋信息</label>
            <span class="sel"><select id="ri" v-model="rebarInfo"><option value=""></option></select><i class="arr"></i></span>
          </div>
          <svg class="preview" viewBox="34 216 759 780">
            <rect x="34" y="216" width="759" height="780" fill="#000" />
            <g stroke="#4a4a4a" stroke-width="2" stroke-dasharray="20 8" fill="none">
              <path v-for="x in gridX" :key="'x' + x" :d="`M${x} 320V975`" />
              <path v-for="y in gridY" :key="'y' + y" :d="`M50 ${y}H655`" />
              <path d="M45 650H655" stroke="#8a8a8a" />
            </g>
            <g fill="#4c4c4c" class="axis"><text x="302" y="347">500</text><text x="318" y="668">0</text><text x="620" y="668">500</text><text x="312" y="985">500</text></g>
            <rect x="226" y="379" width="190" height="543" fill="none" stroke="#fff" stroke-width="3" />
            <path d="M416 379L484 315" stroke="#fff" stroke-width="3" />
            <g stroke="#e81414" fill="none" stroke-width="7">
              <rect x="240" y="393" width="160" height="513" rx="10" />
              <path d="M313 393V906M240 492h160M240 605h160M240 690h160M240 806h160" />
              <path d="M255 400l40 38M244 408l42 42M328 402l42 36M354 553l45 40M346 562l42 42M354 751l45 40M346 763l42 40M371 863l-42 38" stroke-width="5" />
            </g>
            <g fill="#e8e040"><circle cx="246" cy="403" r="6" /><circle cx="392" cy="403" r="6" /><circle cx="246" cy="897" r="6" /><circle cx="392" cy="897" r="6" /></g>
            <g fill="#c030c0"><circle v-for="c in [[319, 402], [319, 897], [246, 499], [391, 499], [246, 600], [391, 600], [246, 697], [391, 697], [246, 798], [391, 798]]" :key="c.join()" :cx="c[0]" :cy="c[1]" r="5" /></g>
            <g stroke="#20d020" stroke-width="3" fill="none">
              <path d="M442 379v543M422 379h38M422 650h38M422 922h38M428 365l28 28M428 636l28 28M428 936l28-28" />
              <path d="M226 946h190M226 925v40M319 925v40M416 925v40M214 958l24-24M307 958l24-24M404 958l24-24" />
            </g>
            <g class="tiny"><text x="484" y="294" fill="#fff">角筋</text><text x="484" y="319" fill="#fff">箍筋</text>
              <text x="546" y="294" fill="#20e020">4C16</text><text x="546" y="318" fill="#20e020">C8@90/180</text><text x="294" y="366" fill="#20e020">1C16</text>
              <text x="448" y="522" fill="#fff">425</text><text x="448" y="795" fill="#fff">425</text><text x="256" y="981" fill="#fff">150</text><text x="348" y="981" fill="#fff">150</text>
              <text transform="translate(211 672) rotate(-90)" fill="#20e020">4C12</text></g>
            <rect x="37" y="219" width="753" height="774" fill="none" stroke="#d81018" stroke-width="6" />
          </svg>
        </section>
        <div class="coords"><span>坐标 (X: 0 Y: 0)</span><span></span></div>
      </aside>
    </div>

    <footer class="status"><span class="s1">:27m</span><span class="s2">1(2)</span><span class="s3"></span><span class="s4">219.5 FPS</span></footer>
    <div class="taskbar">
      <button class="task" aria-label="文件夹"><svg viewBox="0 0 32 14" width="32" height="14"><path d="M0 7l4-2h10l2 3h12l3 6H2z" fill="#f0d890" stroke="#b89848" /><path d="M6 5l8-1v7H6zM18 6l8-1v7h-8z" fill="#e8f0d8" stroke="#c8b060" /><path d="M6 6h3M18 7h3" stroke="#d03a30" stroke-width="2" /></svg></button>
      <button class="task" aria-label="浏览器"><svg viewBox="0 0 30 14" width="30" height="14"><rect y="3" width="30" height="14" rx="2" fill="#1f78d8" stroke="#123f80" /><path d="M5 14c3-7 17-7 20 0" fill="#bfe4fa" /></svg></button>
      <button class="task lit" aria-label="云助手"><svg viewBox="0 0 32 14" width="32" height="14"><rect y="1" width="32" height="16" rx="5" fill="#1497f4" /><path d="M20 7q-3-2-6 0-3 3 1 7" fill="none" stroke="#fff" stroke-width="3" /></svg></button>
      <div class="tray">
        <svg viewBox="0 0 110 15" width="110" height="15"><path d="M1 5v10M4 5v10M7 5v10" stroke="#8a97a6" stroke-dasharray="1 2" /><path d="M20 14q4-4 7-1t5-2" fill="none" stroke="#c4ccd4" stroke-width="2" /><path d="M78 13h3M98 12v3" stroke="#dde" stroke-width="2" /></svg>
        <time>11:08</time><i class="peek"></i>
      </div>
    </div>
    <div class="score">65</div>
  </div>
</template>

<style>
html, body { margin: 0; overflow: hidden; }
</style>

<style scoped>
* { box-sizing: border-box; }
.app {
  position: relative; display: flex; flex-direction: column; height: 100vh; min-height: 720px; overflow: hidden;
  background: #efefef; color: #000; font: 12px/16px "Open Sans", "Noto Sans CJK SC", sans-serif; white-space: nowrap;
}
button { border: 0; background: none; padding: 0; margin: 0; font: inherit; color: inherit; }
select, input { font: inherit; color: inherit; margin: 0; }
.ic { width: 16px; height: 16px; flex: none; display: block; }

.menubar { display: flex; justify-content: space-between; height: 21px; flex: none; line-height: 14px; }
.menus, .account { display: flex; align-items: center; height: 14px; }
.menus { gap: 12px; margin-left: -3px; }
.menus a { color: #000; text-decoration: none; }
.account { gap: 9px; padding: 0 6px 0 20px; }
.mi { display: flex; align-items: center; gap: 4px; }
.mi.new { margin-left: -3px; }
.mi.bot { margin-left: -11px; }

.row { display: flex; align-items: center; height: 28px; flex: none; }
.view-row { height: 29px; }
.row.short { height: 27px; }
.group { display: flex; align-items: center; height: 26px; background: linear-gradient(#fdfdfd, #f0f0f0); margin-right: 3px; }
.tool { display: flex; align-items: center; gap: 3px; height: 24px; padding: 0 4px; flex: none; }
.tool:disabled { color: #8c8c8c; }
.tool.on { background: #e3effb; box-shadow: inset 0 0 0 1px #4a90dc; }
.tool.cropped { margin-left: -10px; }
.lead > .group:first-child { margin-left: -4px; }
.view-row > .group:first-child { margin-left: -13px; }
.sep { width: 1px; height: 14px; margin: 0 3px 0 2px; background: #bcbcbc; flex: none; }
.arr { display: block; width: 9px; height: 4px; flex: none; }
.arr::after { content: ""; display: block; width: 0; margin: 0 auto; border: 3px solid transparent; border-top: 4px solid #111; border-bottom: 0; }
.tool:disabled .arr::after { border-top-color: #8c8c8c; }
.arr.menu { margin-left: -4px; }
.arr.split { width: 14px; margin-left: -4px; }
.handle { width: 2px; height: 15px; margin: 0 3px; flex: none; background: repeating-linear-gradient(#a8b0b8 0 2px, transparent 2px 5px); }
.stub { width: 26px; }

.combo { display: flex; align-items: center; width: 72px; height: 20px; padding: 0 2px 0 3px; background: #fff; }
.combo select { flex: 1; min-width: 0; appearance: none; border: 0; background: none; padding: 0; height: 20px; }
.combo.tail { width: 40px; justify-content: flex-end; }
.combo.narrow { width: 61px; }

.body { display: flex; flex: 1; min-height: 0; }
.left { flex: 1; min-width: 0; display: flex; flex-direction: column; }
.right { width: 264px; margin-left: 3px; flex: none; display: flex; flex-direction: column; padding-right: 2px; }

.canvas { position: relative; flex: 1; min-height: 0; background: #000; overflow: hidden; isolation: isolate; }
.scene { display: block; width: 100%; height: 100%; }
.big { font: 500 110px "Noto Sans CJK SC", sans-serif; }
.big .cjk { font-size: 106px; }
.xor { mix-blend-mode: difference; }
.mark { font: 16px "Noto Sans CJK SC", sans-serif; font-feature-settings: "hwid" 1; }
.float {
  position: absolute; left: -2px; top: 3px; width: 85px; height: 181px; padding: 0 5px 5px 0; color: #000;
  background: linear-gradient(90deg, #555, #333 50%, #111); border: 1px solid #999; border-radius: 5px;
}
.float-title { height: 25px; line-height: 24px; width: 9px; direction: rtl; overflow: hidden; }
.float-body { height: 149px; background: #fff; border: 2px solid #a8acb2; box-shadow: 0 0 0 1px #111; padding-top: 24px; overflow: hidden; }
.float-body p { margin: 0; width: 38px; direction: rtl; line-height: 18px; }
.float-body .cut { width: 3px; }

.snap { height: 30px; }
.snap .group { height: 30px; }
.snap .handle { margin: 0 4px; }
.num { display: flex; align-items: center; gap: 2px; color: #8a8a8a; font-size: 13px; }
.num + .num { padding-left: 4px; }
.spin { position: relative; display: flex; width: 58px; height: 23px; border: 1px solid #767676; background: #f4f4f4; }
.spin.wide { width: 68px; margin-left: 4px; }
.spin input { width: 100%; border: 0; background: none; padding: 0 18px 0 0; text-align: right; color: #8a8a8a; }
.ud { position: absolute; right: 3px; top: 3px; width: 6px; height: 15px; }
.ud::before, .ud::after { content: ""; position: absolute; left: 0; border: 3px solid transparent; }
.ud::before { top: 0; border-top: 0; border-bottom: 3px solid #666; }
.ud::after { bottom: 0; border-bottom: 0; border-top: 3px solid #666; }
.chk { display: flex; align-items: center; gap: 8px; }
.chk input { appearance: none; width: 12px; height: 12px; border: 1px solid #888; background: #fafafa; }

.rebar { height: 26px; margin-top: 4px; padding-left: 5px; background: linear-gradient(#fdfdfd, #efefef); }
.total { margin-left: 5px; }

.sheet, .props, .dock-title, .coords, .status { font-family: "Noto Sans CJK SC", sans-serif; font-feature-settings: "hwid" 1; }
.sheet { position: relative; display: flex; justify-content: space-between; height: 173px; flex: none; background: #fff; border: 1px solid #98a0a4; border-left: 0; overflow: hidden; }
table { border-collapse: separate; border-spacing: 0; table-layout: fixed; }
.bars { width: 1193px; flex: none; }
.bars thead th { height: 20px; padding: 0; font-weight: 400; line-height: 16px; background: linear-gradient(#fff, #f0f0f2); border-right: 1px solid #b0b4b4; border-bottom: 1px solid #b0b4b4; overflow: hidden; }
.bars thead th:nth-child(-n+5) { border-right-color: #d8dada; }
.bars thead th.hot { background: linear-gradient(#f8d48e, #f0ba58); color: #600838; }
.bars td, .rn { padding: 0 0 0 2px; background: #ccffd9; border-right: 1px solid #a4b8a8; border-bottom: 1px solid #a4b8a8; overflow: hidden; line-height: 12px; }
.rn { font-weight: 400; text-align: left; border-right: 1px solid #000; }
.r0 > *, .r1 > * { height: 41px; }
.r2 > * { height: 34px; }
.r3 > * { height: 29px; }
.r4 > * { height: 8px; }
.bars td.mid { text-align: center; padding: 0; }
.bars td.shape { padding: 0; }
.bars td.cur { background: #b3ecda; }
.shape svg { display: block; }
.shape text { font-size: 12px; }
.red { fill: #e01010; }
.grade { width: 10px; height: 11px; vertical-align: -2px; }
.v .grade { margin: 0 2px; }
.scroll { display: flex; flex-direction: column; align-items: center; width: 16px; margin-right: 1px; background: #eee; }
.scroll i { width: 0; border: 4px solid transparent; flex: none; }
.scroll .up { border-top: 0; border-bottom: 4px solid #333; margin: 8px 0; }
.scroll .dn { border-bottom: 0; border-top: 4px solid #333; margin: auto 0 7px; }
.thumb { display: flex; align-items: center; justify-content: center; width: 15px; height: 55px; border: 1px solid #989898; background: linear-gradient(90deg, #f6f6f6, #cfcfd2); }
.thumb b { width: 7px; height: 8px; background: repeating-linear-gradient(#555 0 1px, transparent 1px 3px); }
.ring { position: absolute; left: 5px; top: 20px; width: 801px; height: 76px; }

.dock-title { display: flex; justify-content: space-between; align-items: center; height: 16px; font-size: 13px; border: 1px solid #8a8a8a; flex: none; }
.prop-box { position: relative; flex: 1; min-height: 0; margin-top: 1px; background: #fff; border: 1px solid #a4a4a8; padding-left: 1px; }
.props { width: 259px; }
.c1 { width: 21px; }
.c2 { width: 121px; }
.props th, .props td { height: 19px; padding: 0; font-weight: 400; line-height: 14px; border-right: 1px solid #b4b4b4; border-bottom: 1px solid #b4b4b4; }
.props thead th { height: 24px; background: linear-gradient(#fff, #f0f0f0); }
.props thead th.hot { background: linear-gradient(#f8d48e, #f0ba58); color: #600838; }
.props tbody th { background: linear-gradient(90deg, #fff, #efefef); }
.props .k { padding-left: 20px; position: relative; }
.props .v { padding-left: 2px; color: #808080; }
.blue .k { color: #0000c8; }
.gray .k { color: #808080; }
.sel .k { background: #3399ff; color: #fff; }
.props .sel .v { background: #e0effd; }
.props .sel th { background: #fbd08a; color: #600838; }
.plus { position: absolute; left: 2px; top: 3px; width: 12px; height: 12px; border: 1px solid #b0b0b0; background: linear-gradient(#000, #000) center/8px 1px no-repeat, linear-gradient(#000, #000) center/1px 8px no-repeat, #e8e8e8; }
.prop-ring { position: absolute; left: 2px; top: 98px; width: 260px; height: 71px; overflow: visible; }

.preview-box { margin: 6px 1px 0 0; flex: none; border: 1px solid #a0a0a4; background: #f4f4f4; padding: 4px 2px 2px 4px; }
.p-tools { display: flex; align-items: center; height: 26px; gap: 10px; background: linear-gradient(#fdfdfd, #f2f2f2); }
.p-tools .handle, .p-info .handle { margin: 0 0 0 3px; }
.p-tools .handle { margin-right: -3px; }
.more { margin: 0 3px 10px auto; }
.p-info { display: flex; align-items: center; height: 27px; color: #808080; }
.p-info label { margin: 0 2px 0 6px; }
.p-info .sel { position: relative; display: flex; align-items: center; width: 133px; height: 23px; border: 1px solid #767676; background: #f6f6f6; }
.p-info select { width: 100%; height: 21px; appearance: none; border: 0; background: none; }
.p-info .arr { position: absolute; right: 2px; top: 9px; }
.preview { display: block; width: 100%; margin-top: 2px; }
.axis { font: 27px "DejaVu Sans Mono", monospace; }
.tiny { font: 20px "DejaVu Sans Mono", "Noto Sans CJK SC", monospace; }
.coords { display: flex; gap: 3px; height: 21px; margin: 3px 0 0; flex: none; line-height: 18px; }
.coords span { width: 148px; padding-left: 2px; border: 1px solid #d4d4d4; background: linear-gradient(#fdfdfd, #f0f0f0); white-space: pre; }
.coords span + span { flex: 1; }

.status { display: flex; gap: 3px; height: 22px; padding-top: 1px; flex: none; line-height: 19px; background: #efefef; }
.status span { border: 1px solid #d4d4d4; border-left-color: #e4e4e4; background: linear-gradient(#fdfdfd, #f2f2f2); padding-left: 1px; }
.s1 { width: 57px; }
.s2 { width: 48px; }
.s3 { flex: 1; }
.s4 { width: 70px; }
.taskbar { display: flex; height: 15px; flex: none; padding-top: 1px; gap: 5px; background: linear-gradient(#8c98a4 0 1px, #2c3c50 2px, #26364a); overflow: hidden; }
.task { display: flex; justify-content: center; width: 57px; height: 20px; border: 1px solid #aab4be; border-radius: 2px; background: linear-gradient(#7c8ca0, #3a5070); }
.task:first-child { width: 50px; padding-right: 9px; }
.task.lit { background: linear-gradient(#e8eef4, #a8bccc); }
.tray { display: flex; margin-left: auto; color: #fff; }
.tray svg { margin-right: 57px; }
.tray time { width: 52px; font-size: 12px; line-height: 20px; }
.peek { width: 12px; border: 1px solid #8a96a4; margin-right: 3px; background: #4a5a6c; }
.score { position: absolute; right: -27px; bottom: 159px; width: 46px; height: 46px; border-radius: 50%; border: 2px solid #d8e8d8; background: linear-gradient(#6cd47c, #34a848); color: #fff; font: bold 13px/42px "Open Sans", sans-serif; padding-left: 3px; }
</style>
